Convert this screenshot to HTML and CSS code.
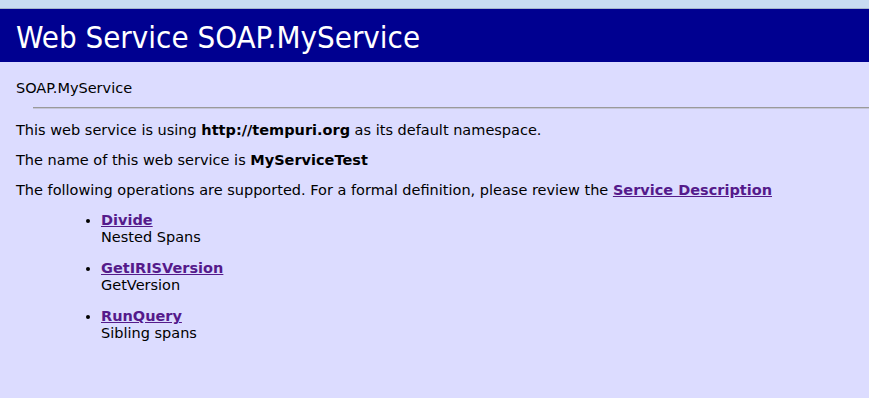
FILE: index.html
```html
<!DOCTYPE html>
<html lang="en">
<head>
  <meta charset="UTF-8" />
  <title>SOAP.MyService Web Service</title>
  <link rel="stylesheet" href="styles.css">
</head>
<body>

  <div class="topbar"></div>

  <div class="heading">Web Service SOAP.MyService</div>

  <div class="content">
    <p class="svc-name">SOAP.MyService</p>
    <hr>

    <p>This web service is using <b>http://tempuri.org</b> as its default namespace.</p>
    <p>The name of this web service is <b>MyServiceTest</b></p>
    <p>The following operations are supported. For a formal definition, please review the <a href="#">Service Description</a></p>

    <ul class="ops">
      <li>
        <a href="#">Divide</a><br>
        Nested Spans
      </li>
      <li>
        <a href="#">GetIRISVersion</a><br>
        GetVersion
      </li>
      <li>
        <a href="#">RunQuery</a><br>
        Sibling spans
      </li>
    </ul>
  </div>

</body>
</html>
```

FILE: styles.css
```css
body {
  margin: 0;
  background-color: #dcdcff;
  color: #000000;
  font-family: "DejaVu Sans", Verdana, sans-serif;
  font-size: 14.5px;
  line-height: 17px;
}

.topbar {
  height: 8px;
  background-color: #c8dcf2;
  border-bottom: 1px solid #a4b4cc;
}

.heading {
  height: 53px;
  box-sizing: border-box;
  padding: 10px 0 0 16px;
  background-color: #000090;
  color: #ffffff;
  font-family: "DejaVu Sans Condensed", Tahoma, sans-serif;
  font-size: 31px;
  line-height: 36px;
}

.content {
  padding-left: 16px;
}

p {
  margin: 13px 0;
}

.svc-name {
  margin: 18px 0 10px;
}

hr {
  height: 0;
  margin: 0 0 10px 17px;
  border: none;
  border-top: 1px solid #9a9a9a;
  border-bottom: 1px solid #c4c4d8;
}

a {
  color: #551a8b;
  font-weight: bold;
}

.ops {
  margin: 13px 0;
  padding-left: 85px;
}

.ops li {
  margin-bottom: 14px;
}
```
